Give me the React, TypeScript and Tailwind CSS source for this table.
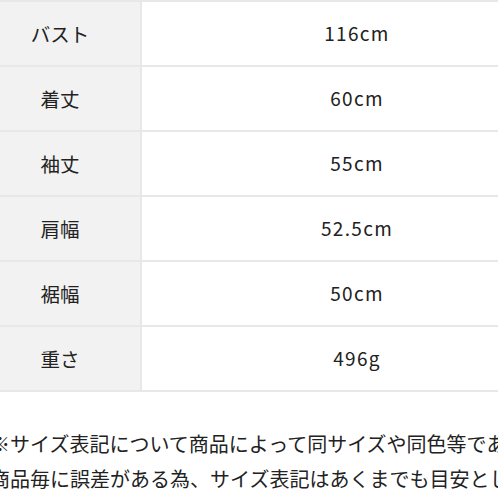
const rows = [
  { label: 'バスト', value: '116cm' },
  { label: '着丈', value: '60cm' },
  { label: '袖丈', value: '55cm' },
  { label: '肩幅', value: '52.5cm' },
  { label: '裾幅', value: '50cm' },
  { label: '重さ', value: '496g' },
]

const notes = [
  '※サイズ表記について商品によって同サイズや同色等であっても',
  '商品毎に誤差がある為、サイズ表記はあくまでも目安としてご',
  'ください。',
]

export default function App() {
  return (
    <div
      className="w-[498px] h-[498px] overflow-hidden bg-white text-[#222]"
      style={{ fontFamily: '"Noto Sans CJK JP", "Noto Sans", sans-serif' }}
    >
      <div className="ml-[-20px] w-[592px] border-t-2 border-[#e8e8e8]">
        {rows.map((r) => (
          <div key={r.label} className="flex h-[65px] border-b-2 border-[#e8e8e8]">
            <div className="w-[162px] shrink-0 flex items-center justify-center bg-[#f2f2f2] border-r-2 border-[#e8e8e8] text-[19.5px]">
              {r.label}
            </div>
            <div className="flex-1 flex items-center justify-center text-[19px] tracking-[0.07em]">
              {r.value}
            </div>
          </div>
        ))}
      </div>
      <div className="mt-[34px] ml-[-10px] text-[20px] leading-[35px] whitespace-nowrap">
        {notes.map((n) => (
          <div key={n}>{n}</div>
        ))}
      </div>
    </div>
  )
}
